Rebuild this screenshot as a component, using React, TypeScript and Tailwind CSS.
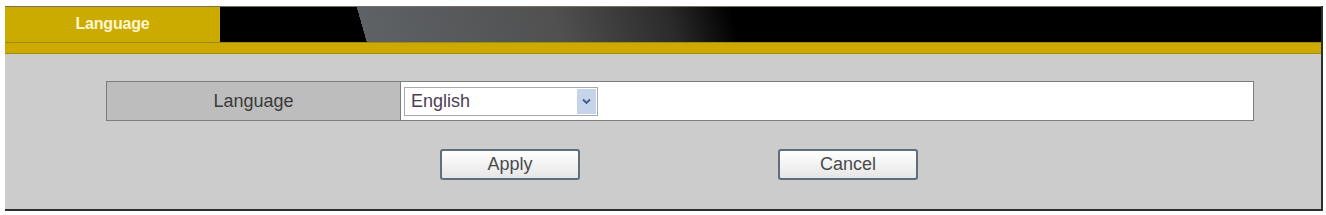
import React from "react";

export default function App() {
  return (
    <div className="h-[215px] w-[1326px] bg-white pl-[5px] pr-[3px] pt-[6px] font-['Liberation_Sans',Arial,sans-serif]">
      <div className="flex h-[205px] flex-col border-r-2 border-b-2 border-[#2e2e2e] bg-[#cccccc]">
        {/* Header tab bar */}
        <div className="flex h-[36px] border-t border-[#77705a]">
          <div className="flex w-[215px] items-start justify-center bg-[#cbab00] pt-[5px] text-[16px] font-bold tracking-[-0.2px] text-[#fff6d2]">
            Language
          </div>
          <div className="flex-1 bg-[linear-gradient(74deg,#000_0,#000_141px,#5e6266_141px,#505050_330px,#2a2a2a_440px,#000_500px,#000_100%)]" />
        </div>
        {/* Gold stripe */}
        <div className="h-[12px] border-t border-b border-[#a08a10] bg-[#ccaa00]" />

        {/* Form body */}
        <div className="ml-[101px] mt-[27px] flex h-[40px] w-[1148px] border border-[#7d7d7d]">
          <div className="flex w-[294px] items-center justify-center border-r border-[#7d7d7d] bg-[#bdbdbd] text-[18px] text-[#3a3a3a]">
            Language
          </div>
          <div className="flex flex-1 items-center bg-white pl-[3px]">
            <div className="flex h-[29px] w-[194px] items-center border border-[#a9a9a9] bg-white">
              <span className="flex-1 pl-[6px] text-[18px] text-[#4a3f55]">English</span>
              <span className="mr-[1px] flex h-[25px] w-[19px] items-center justify-center bg-[#c6d4ea]">
                <svg width="9" height="7" viewBox="0 0 9 7">
                  <path d="M1 1.5 L4.5 5 L8 1.5" fill="none" stroke="#3c5a8c" strokeWidth="1.8" />
                </svg>
              </span>
            </div>
          </div>
        </div>

        <div className="ml-[435px] mt-[28px] flex gap-[198px]">
          <button className="h-[31px] w-[140px] rounded-[3px] border-2 border-[#5f6d7c] bg-[linear-gradient(#ffffff,#e6e6e6)] text-[18px] text-[#4a4a4a]">
            Apply
          </button>
          <button className="h-[31px] w-[140px] rounded-[3px] border-2 border-[#5f6d7c] bg-[linear-gradient(#ffffff,#e6e6e6)] text-[18px] text-[#4a4a4a]">
            Cancel
          </button>
        </div>
      </div>
    </div>
  );
}
